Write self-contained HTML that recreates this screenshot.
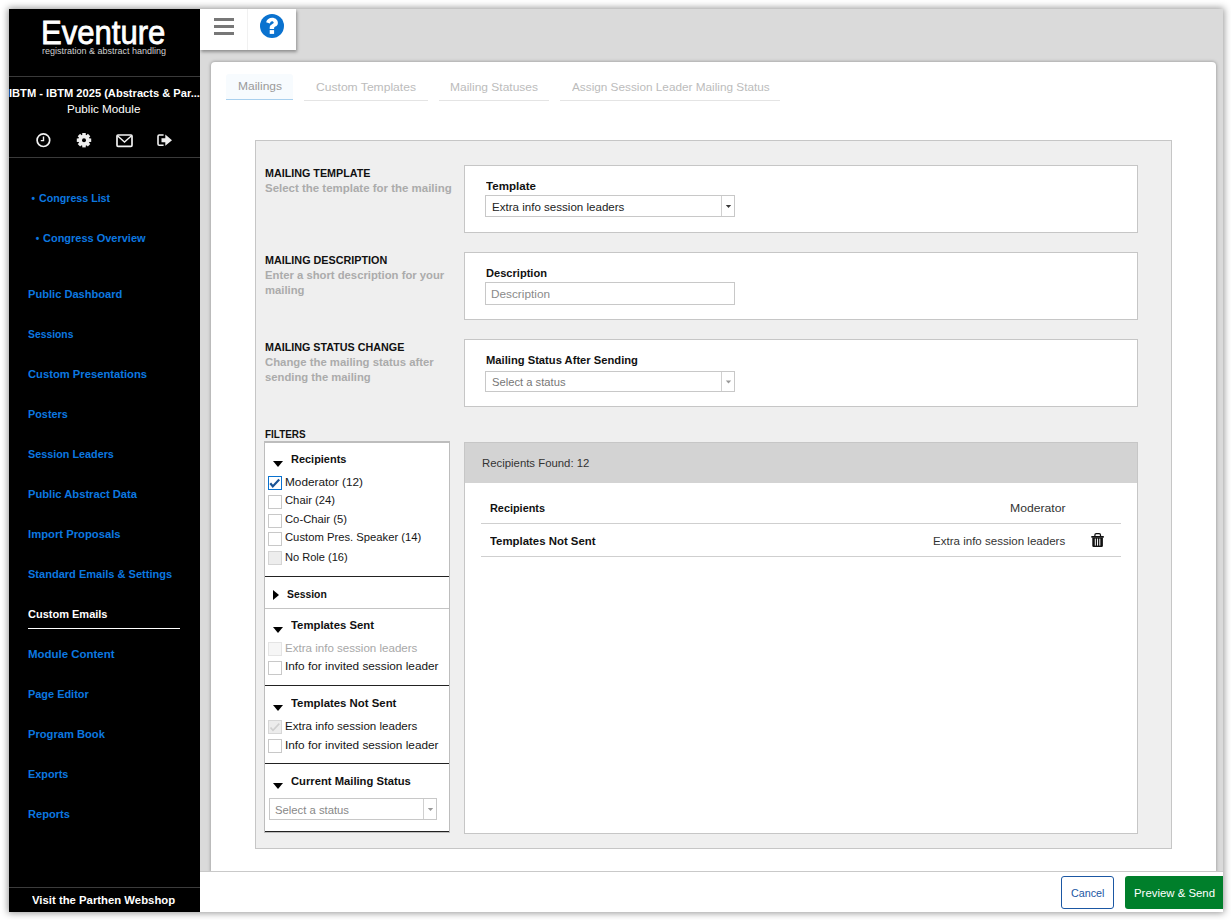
<!DOCTYPE html>
<html><head><meta charset="utf-8"><title>Eventure - Custom Emails</title>
<style>
*{box-sizing:border-box;margin:0;padding:0}
html,body{width:1231px;height:920px;overflow:hidden;background:#fff;font-family:"Liberation Sans",sans-serif}
.b{position:absolute}
.t{position:absolute;white-space:nowrap;line-height:1;transform-origin:0 0}
</style></head><body>
<div class="b" style="left:9px;top:9px;width:1214px;height:903px;background:#dadada;box-shadow:0 0 7px 1px rgba(0,0,0,.42)"></div>
<div class="b" style="left:9px;top:9px;width:191px;height:903px;background:#000"></div>
<div class="t" style="left:41.40px;top:15px;font-size:34px;color:#fff;transform:scaleX(0.9141);-webkit-text-stroke:0.8px #fff;">Eventure</div>
<div class="t" style="left:41.60px;top:46px;font-size:9.4px;color:#cfcfcf;transform:scaleX(0.9600);">registration &amp; abstract handling</div>
<div class="b" style="left:9px;top:76px;width:191px;height:1px;background:#3a3a3a"></div>
<div class="t" style="left:9px;top:88.00px;width:191px;overflow:hidden;font-size:11.8px;font-weight:bold;color:#fff;text-align:left"><span style="display:inline-block;transform:scaleX(0.9427);transform-origin:0 0;white-space:nowrap">IBTM - IBTM 2025 (Abstracts &amp; Par...</span></div>
<div class="t" style="left:67.40px;top:104px;font-size:11.8px;color:#fff;transform:scaleX(0.9903);">Public Module</div>
<div class="b" style="left:9px;top:157px;width:191px;height:1px;background:#3a3a3a"></div>
<div class="t" style="left:31.60px;top:194px;font-size:10px;font-weight:bold;color:#0c78e0;">•</div>
<div class="t" style="left:39.10px;top:193px;font-size:11.8px;font-weight:bold;color:#0c78e0;transform:scaleX(0.9036);">Congress List</div>
<div class="t" style="left:35.80px;top:234px;font-size:10px;font-weight:bold;color:#0c78e0;">•</div>
<div class="t" style="left:43.40px;top:233px;font-size:11.8px;font-weight:bold;color:#0c78e0;transform:scaleX(0.9312);">Congress Overview</div>
<div class="t" style="left:28.00px;top:289px;font-size:11.8px;font-weight:bold;color:#0c78e0;transform:scaleX(0.9410);">Public Dashboard</div>
<div class="t" style="left:28.00px;top:329px;font-size:11.8px;font-weight:bold;color:#0c78e0;transform:scaleX(0.8762);">Sessions</div>
<div class="t" style="left:28.00px;top:369px;font-size:11.8px;font-weight:bold;color:#0c78e0;transform:scaleX(0.9502);">Custom Presentations</div>
<div class="t" style="left:28.00px;top:409px;font-size:11.8px;font-weight:bold;color:#0c78e0;transform:scaleX(0.9194);">Posters</div>
<div class="t" style="left:28.00px;top:449px;font-size:11.8px;font-weight:bold;color:#0c78e0;transform:scaleX(0.9159);">Session Leaders</div>
<div class="t" style="left:28.00px;top:489px;font-size:11.8px;font-weight:bold;color:#0c78e0;transform:scaleX(0.9481);">Public Abstract Data</div>
<div class="t" style="left:28.00px;top:529px;font-size:11.8px;font-weight:bold;color:#0c78e0;transform:scaleX(0.9543);">Import Proposals</div>
<div class="t" style="left:28.00px;top:569px;font-size:11.8px;font-weight:bold;color:#0c78e0;transform:scaleX(0.9358);">Standard Emails &amp; Settings</div>
<div class="t" style="left:28.00px;top:609px;font-size:11.8px;font-weight:bold;color:#fff;transform:scaleX(0.9326);">Custom Emails</div>
<div class="t" style="left:28.00px;top:649px;font-size:11.8px;font-weight:bold;color:#0c78e0;transform:scaleX(0.9704);">Module Content</div>
<div class="t" style="left:28.00px;top:689px;font-size:11.8px;font-weight:bold;color:#0c78e0;transform:scaleX(0.9258);">Page Editor</div>
<div class="t" style="left:28.00px;top:729px;font-size:11.8px;font-weight:bold;color:#0c78e0;transform:scaleX(0.9458);">Program Book</div>
<div class="t" style="left:28.00px;top:769px;font-size:11.8px;font-weight:bold;color:#0c78e0;transform:scaleX(0.9196);">Exports</div>
<div class="t" style="left:28.00px;top:809px;font-size:11.8px;font-weight:bold;color:#0c78e0;transform:scaleX(0.9398);">Reports</div>
<div class="b" style="left:28px;top:628px;width:152px;height:1px;background:#fff"></div>
<div class="b" style="left:9px;top:887px;width:191px;height:1px;background:#3c3c3c"></div>
<div class="t" style="left:32.10px;top:895px;font-size:11.8px;font-weight:bold;color:#fff;transform:scaleX(0.9607);">Visit the Parthen Webshop</div>
<svg class="b" style="left:9px;top:126px" width="191" height="30" viewBox="9 126 191 30">
<g fill="none" stroke="#f2f2f2" stroke-width="1.7">
<circle cx="43.4" cy="140.2" r="6.3"/>
<path d="M43.5 136.6V140.6H40.8" stroke-width="1.4"/>
<rect x="117" y="135" width="15" height="11.3" rx="1"/>
<path d="M117.5 135.8L124.5 142L131.5 135.8" stroke-width="1.4"/>
<path d="M163.6 135H159.2Q158 135 158 136.2V144Q158 145.2 159.2 145.2H163.6" stroke-width="1.6"/>
</g>
<path fill="#eee" d="M161.5 138.3H165.3V134.6L172 140.2L165.3 145.8V142.2H161.5Z"/>
<g fill="#eee" transform="translate(84 140.2)">
<circle r="5.7"/>
<g id="tooth"><rect x="-1.75" y="-7.2" width="3.5" height="3"/></g>
<use href="#tooth" transform="rotate(45)"/><use href="#tooth" transform="rotate(90)"/><use href="#tooth" transform="rotate(135)"/>
<use href="#tooth" transform="rotate(180)"/><use href="#tooth" transform="rotate(225)"/><use href="#tooth" transform="rotate(270)"/><use href="#tooth" transform="rotate(315)"/>
<circle r="2.0" fill="#000"/>
</g>
</svg>
<div class="b" style="left:200px;top:9px;width:96px;height:41px;background:#fff;box-shadow:1px 2px 3px rgba(0,0,0,.35)"></div>
<div class="b" style="left:247px;top:9px;width:1px;height:41px;background:#f1f1f1"></div>
<div class="b" style="left:214px;top:18px;width:20px;height:3px;background:#777"></div>
<div class="b" style="left:214px;top:25px;width:20px;height:3px;background:#777"></div>
<div class="b" style="left:214px;top:32px;width:20px;height:3px;background:#777"></div>
<svg class="b" style="left:258px;top:12px" width="28" height="28" viewBox="258 12 28 28">
<circle cx="272" cy="25.9" r="12" fill="#0a72cf"/>
<path d="M266.1 22.2C266.9 19.5 269.2 17.8 272.1 17.8C275.3 17.8 277.9 19.9 277.9 22.9C277.9 25.1 276.4 26 275.2 26.6C274.5 27 274.1 27.4 274.1 28V28.9H269.7V27.6C269.7 25.9 270.6 25 272 24.2C273 23.6 273.7 23.2 273.7 22.5C273.7 21.8 272.9 21.2 272 21.2C271 21.2 270.5 21.9 269.8 23.4Z" fill="#fff"/>
<rect x="269.7" y="30.1" width="4.4" height="3.8" fill="#fff"/>
</svg>
<div class="b" style="left:211px;top:62px;width:1005px;height:809px;background:#fff;border-radius:4px 4px 0 0;box-shadow:0 0 3px 1px rgba(0,0,0,.22)"></div>
<div class="b" style="left:226px;top:74px;width:67px;height:26px;background:#f7fbfe;border-radius:3px 3px 0 0"></div>
<div class="b" style="left:226px;top:99px;width:67px;height:1px;background:#a9d0ee"></div>
<div class="t" style="left:237.70px;top:81px;font-size:11.5px;color:#9a9a9a;transform:scaleX(1.0432);">Mailings</div>
<div class="b" style="left:304px;top:100px;width:124px;height:1px;background:#e4e4e4"></div>
<div class="t" style="left:315.80px;top:82px;font-size:11.5px;color:#bcbcbc;transform:scaleX(1.0524);">Custom Templates</div>
<div class="b" style="left:439px;top:100px;width:110px;height:1px;background:#e4e4e4"></div>
<div class="t" style="left:449.90px;top:82px;font-size:11.5px;color:#bcbcbc;transform:scaleX(1.0430);">Mailing Statuses</div>
<div class="b" style="left:560px;top:100px;width:220px;height:1px;background:#e4e4e4"></div>
<div class="t" style="left:571.60px;top:82px;font-size:11.5px;color:#bcbcbc;transform:scaleX(1.0241);">Assign Session Leader Mailing Status</div>
<div class="b" style="left:255px;top:140px;width:917px;height:709px;background:#efefef;border:1px solid #c6c6c6"></div>
<div class="t" style="left:264.80px;top:167px;font-size:11.6px;font-weight:bold;color:#111;transform:scaleX(0.9267);">MAILING TEMPLATE</div>
<div class="t" style="left:264.80px;top:183px;font-size:11.8px;font-weight:bold;color:#ababab;transform:scaleX(0.9723);">Select the template for the mailing</div>
<div class="t" style="left:264.90px;top:254px;font-size:11.6px;font-weight:bold;color:#111;transform:scaleX(0.9302);">MAILING DESCRIPTION</div>
<div class="t" style="left:264.90px;top:270px;font-size:11.8px;font-weight:bold;color:#ababab;transform:scaleX(0.9562);">Enter a short description for your</div>
<div class="t" style="left:264.90px;top:285px;font-size:11.8px;font-weight:bold;color:#ababab;transform:scaleX(0.9562);">mailing</div>
<div class="t" style="left:264.90px;top:341px;font-size:11.6px;font-weight:bold;color:#111;transform:scaleX(0.9271);">MAILING STATUS CHANGE</div>
<div class="t" style="left:264.90px;top:357px;font-size:11.8px;font-weight:bold;color:#ababab;transform:scaleX(0.9606);">Change the mailing status after</div>
<div class="t" style="left:264.90px;top:372px;font-size:11.8px;font-weight:bold;color:#ababab;transform:scaleX(0.9540);">sending the mailing</div>
<div class="b" style="left:464px;top:165px;width:674px;height:68px;background:#fff;border:1px solid #c6c6c6"></div>
<div class="t" style="left:485.90px;top:181px;font-size:11.8px;font-weight:bold;color:#111;transform:scaleX(0.9818);">Template</div>
<div class="b" style="left:464px;top:252px;width:674px;height:68px;background:#fff;border:1px solid #c6c6c6"></div>
<div class="t" style="left:485.90px;top:268px;font-size:11.8px;font-weight:bold;color:#111;transform:scaleX(0.9397);">Description</div>
<div class="b" style="left:464px;top:339px;width:674px;height:68px;background:#fff;border:1px solid #c6c6c6"></div>
<div class="t" style="left:485.90px;top:355px;font-size:11.8px;font-weight:bold;color:#111;transform:scaleX(0.9489);">Mailing Status After Sending</div>
<div class="b" style="left:485px;top:195px;width:250px;height:22px;background:#fff;border:1px solid #c8c8c8"></div>
<div class="t" style="left:491.60px;top:202px;font-size:11.5px;color:#222;transform:scaleX(1.0055);">Extra info session leaders</div>
<div class="b" style="left:721px;top:196px;width:1px;height:20px;background:#d0d0d0"></div>
<svg class="b" style="left:721px;top:195px" width="14" height="22" viewBox="721 195 14 22"><path d="M725.8 205.0H731.2L728.5 208.0Z" fill="#383838"/></svg>
<div class="b" style="left:485px;top:282px;width:250px;height:23px;background:#fff;border:1px solid #c8c8c8"></div>
<div class="t" style="left:490.90px;top:289px;font-size:11.5px;color:#8a8a8a;transform:scaleX(1.0257);">Description</div>
<div class="b" style="left:485px;top:371px;width:250px;height:21px;background:#fff;border:1px solid #c8c8c8"></div>
<div class="t" style="left:491.60px;top:377px;font-size:11.5px;color:#777;transform:scaleX(0.9744);">Select a status</div>
<div class="b" style="left:721px;top:372px;width:1px;height:19px;background:#d0d0d0"></div>
<svg class="b" style="left:721px;top:371px" width="14" height="21" viewBox="721 371 14 21"><path d="M725.8 380.5H731.2L728.5 383.5Z" fill="#999"/></svg>
<div class="t" style="left:264.80px;top:428px;font-size:11.6px;font-weight:bold;color:#111;transform:scaleX(0.8573);">FILTERS</div>
<div class="b" style="left:264px;top:441px;width:186px;height:392px;background:#fff;border:1px solid #bdbdbd;border-top:2px solid #bdbdbd"></div>
<div class="b" style="left:273px;top:461px;width:0;height:0;border-left:5px solid transparent;border-right:5px solid transparent;border-top:6px solid #000"></div>
<div class="t" style="left:290.60px;top:454px;font-size:11.8px;font-weight:bold;color:#111;transform:scaleX(0.9284);">Recipients</div>
<div class="b" style="left:268px;top:476px;width:14px;height:14px;background:#fff;border:1px solid #0a72cf"></div>
<svg class="b" style="left:268px;top:476px" width="14" height="14" viewBox="0 0 14 14"><path d="M2.3 7.2L4.8 10.4L11.2 3.4" fill="none" stroke="#1b5394" stroke-width="2.2"/></svg>
<div class="t" style="left:284.70px;top:477px;font-size:11.5px;color:#161616;transform:scaleX(1.0256);">Moderator (12)</div>
<div class="b" style="left:268px;top:495px;width:14px;height:14px;background:#fff;border:1px solid #c8c8c8"></div>
<div class="t" style="left:284.70px;top:495px;font-size:11.5px;color:#161616;transform:scaleX(0.9783);">Chair (24)</div>
<div class="b" style="left:268px;top:514px;width:14px;height:14px;background:#fff;border:1px solid #c8c8c8"></div>
<div class="t" style="left:284.70px;top:514px;font-size:11.5px;color:#161616;transform:scaleX(0.9783);">Co-Chair (5)</div>
<div class="b" style="left:268px;top:532px;width:14px;height:14px;background:#fff;border:1px solid #c8c8c8"></div>
<div class="t" style="left:284.70px;top:532px;font-size:11.5px;color:#161616;transform:scaleX(0.9783);">Custom Pres. Speaker (14)</div>
<div class="b" style="left:268px;top:551px;width:14px;height:14px;background:#ededed;border:1px solid #d4d4d4"></div>
<div class="t" style="left:284.70px;top:552px;font-size:11.5px;color:#161616;transform:scaleX(0.9618);">No Role (16)</div>
<div class="b" style="left:265px;top:576px;width:184px;height:1px;background:#222"></div>
<div class="b" style="left:273px;top:590px;width:0;height:0;border-top:5px solid transparent;border-bottom:5px solid transparent;border-left:6px solid #000"></div>
<div class="t" style="left:287.20px;top:589px;font-size:11.8px;font-weight:bold;color:#111;transform:scaleX(0.8795);">Session</div>
<div class="b" style="left:265px;top:608px;width:184px;height:1px;background:#c4c4c4"></div>
<div class="b" style="left:273px;top:627px;width:0;height:0;border-left:5px solid transparent;border-right:5px solid transparent;border-top:6px solid #000"></div>
<div class="t" style="left:291.00px;top:620px;font-size:11.8px;font-weight:bold;color:#111;transform:scaleX(0.9613);">Templates Sent</div>
<div class="b" style="left:268px;top:642px;width:14px;height:14px;background:#f6f6f6;border:1px solid #e4e4e4"></div>
<div class="t" style="left:284.60px;top:643px;font-size:11.5px;color:#a8a8a8;transform:scaleX(1.0055);">Extra info session leaders</div>
<div class="b" style="left:268px;top:661px;width:14px;height:14px;background:#fff;border:1px solid #c8c8c8"></div>
<div class="t" style="left:284.60px;top:661px;font-size:11.5px;color:#161616;transform:scaleX(1.0262);">Info for invited session leader</div>
<div class="b" style="left:265px;top:685px;width:184px;height:1px;background:#222"></div>
<div class="b" style="left:273px;top:705px;width:0;height:0;border-left:5px solid transparent;border-right:5px solid transparent;border-top:6px solid #000"></div>
<div class="t" style="left:291.00px;top:698px;font-size:11.8px;font-weight:bold;color:#111;transform:scaleX(0.9645);">Templates Not Sent</div>
<div class="b" style="left:268px;top:720px;width:14px;height:14px;background:#ececec;border:1px solid #d6d6d6"></div>
<svg class="b" style="left:268px;top:720px" width="14" height="14" viewBox="0 0 14 14"><path d="M2.5 7.4L5 10.3L11.3 3.6" fill="none" stroke="#cfcfcf" stroke-width="1.6"/></svg>
<div class="t" style="left:284.60px;top:721px;font-size:11.5px;color:#161616;transform:scaleX(1.0055);">Extra info session leaders</div>
<div class="b" style="left:268px;top:739px;width:14px;height:14px;background:#fff;border:1px solid #c8c8c8"></div>
<div class="t" style="left:284.60px;top:740px;font-size:11.5px;color:#161616;transform:scaleX(1.0262);">Info for invited session leader</div>
<div class="b" style="left:265px;top:763px;width:184px;height:1px;background:#222"></div>
<div class="b" style="left:273px;top:783px;width:0;height:0;border-left:5px solid transparent;border-right:5px solid transparent;border-top:6px solid #000"></div>
<div class="t" style="left:291.00px;top:776px;font-size:11.8px;font-weight:bold;color:#111;transform:scaleX(0.9517);">Current Mailing Status</div>
<div class="b" style="left:269px;top:798px;width:168px;height:22px;background:#fff;border:1px solid #c8c8c8"></div>
<div class="t" style="left:275.30px;top:805px;font-size:11.5px;color:#888;transform:scaleX(0.9811);">Select a status</div>
<div class="b" style="left:423px;top:799px;width:1px;height:20px;background:#d0d0d0"></div>
<svg class="b" style="left:423px;top:798px" width="14" height="22" viewBox="423 798 14 22"><path d="M427.8 808.0H433.2L430.5 811.0Z" fill="#999"/></svg>
<div class="b" style="left:265px;top:831px;width:184px;height:1px;background:#222"></div>
<div class="b" style="left:464px;top:442px;width:674px;height:392px;background:#fff;border:1px solid #c6c6c6"></div>
<div class="b" style="left:465px;top:443px;width:672px;height:40px;background:#d3d3d3"></div>
<div class="t" style="left:481.80px;top:458px;font-size:11.8px;color:#333;transform:scaleX(0.9631);">Recipients Found: 12</div>
<div class="t" style="left:489.90px;top:503px;font-size:11.8px;font-weight:bold;color:#111;transform:scaleX(0.9217);">Recipients</div>
<div class="t" style="left:1009.80px;top:503px;font-size:11.5px;color:#333;transform:scaleX(1.0589);">Moderator</div>
<div class="b" style="left:481px;top:523px;width:640px;height:1px;background:#cfcfcf"></div>
<div class="t" style="left:489.90px;top:536px;font-size:11.8px;font-weight:bold;color:#111;transform:scaleX(0.9664);">Templates Not Sent</div>
<div class="t" style="left:933.10px;top:536px;font-size:11.5px;color:#333;transform:scaleX(1.0040);">Extra info session leaders</div>
<div class="b" style="left:481px;top:556px;width:640px;height:1px;background:#cfcfcf"></div>
<svg class="b" style="left:1088px;top:530px" width="20" height="20" viewBox="1088 530 20 20">
<path d="M1094.9 536.4V535Q1094.9 533.7 1096.2 533.7H1099.2Q1100.5 533.7 1100.5 535V536.4" fill="none" stroke="#111" stroke-width="1.25"/>
<rect x="1091.3" y="536" width="12.5" height="1.7" fill="#111"/>
<path d="M1092.3 537.4H1102.9V545.8Q1102.9 547 1101.7 547H1093.5Q1092.3 547 1092.3 545.8Z" fill="#111"/>
<rect x="1094.8" y="538.6" width="1" height="7" fill="#fff"/>
<rect x="1097.05" y="538.6" width="1" height="7" fill="#fff"/>
<rect x="1099.3" y="538.6" width="1" height="7" fill="#fff"/>
</svg>
<div class="b" style="left:200px;top:871px;width:1023px;height:41px;background:#fff;border-top:1px solid #c9c9c9"></div>
<div class="b" style="left:1061px;top:876px;width:53px;height:33px;border:1px solid #1b57a3;border-radius:3px;background:#fff"></div>
<div class="t" style="left:1070.90px;top:888px;font-size:11.8px;color:#1b57a3;transform:scaleX(0.9120);">Cancel</div>
<div class="b" style="left:1125px;top:876px;width:98px;height:33px;background:#007f2b;border-radius:3px 0 0 3px"></div>
<div class="t" style="left:1134.10px;top:888px;font-size:11.8px;color:#fff;transform:scaleX(0.9648);">Preview &amp; Send</div>
</body></html>
